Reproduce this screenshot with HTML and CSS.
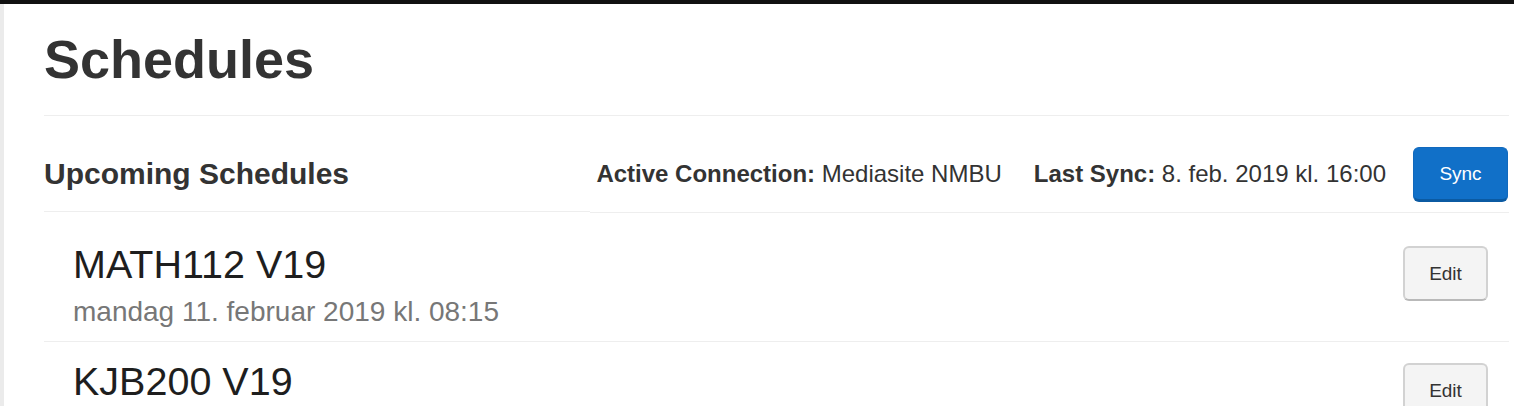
FILE: index.html
```html
<!DOCTYPE html>
<html lang="en">
<head>
<meta charset="utf-8">
<title>Schedules</title>
<link rel="stylesheet" href="styles.css">
</head>
<body>
<div class="topbar"></div>
<div class="page">
  <main class="content">
    <h1 class="title">Schedules</h1>
    <hr class="rule">
    <div class="header">
      <h2 class="header-title">Upcoming Schedules</h2>
      <div class="header-info">
        <span class="info info-conn"><b>Active Connection:</b> Mediasite NMBU</span>
        <span class="info info-sync"><b>Last Sync:</b> 8. feb. 2019 kl. 16:00</span>
        <button class="btn btn-primary" type="button">Sync</button>
      </div>
    </div>
    <ul class="list">
      <li class="item">
        <div class="item-text">
          <h3 class="item-title">MATH112 V19</h3>
          <p class="item-date">mandag 11. februar 2019 kl. 08:15</p>
        </div>
        <button class="btn btn-default" type="button">Edit</button>
      </li>
      <li class="item">
        <div class="item-text">
          <h3 class="item-title">KJB200 V19</h3>
          <p class="item-date">mandag 11. februar 2019 kl. 10:15</p>
        </div>
        <button class="btn btn-default" type="button">Edit</button>
      </li>
    </ul>
  </main>
</div>
</body>
</html>
```
FILE: styles.css
```css
html, body {
  margin: 0;
  padding: 0;
  background: #ffffff;
  font-family: "Liberation Sans", Arial, sans-serif;
  color: #333333;
  overflow: hidden;
}

.topbar {
  height: 4px;
  background: #111111;
}

.page {
  display: flow-root;
  border-left: 4px solid #ebebeb;
  min-height: 402px;
}

.content {
  margin: 0 5px 0 40px;
}

.title {
  margin: 26px 0 26px 0;
  font-size: 54px;
  line-height: 59px;
  font-weight: bold;
  color: #333333;
}

.rule {
  margin: 0;
  border: 0;
  border-top: 1px solid #eeeeee;
  height: 0;
}

.header {
  display: flex;
}

.header-title {
  width: 546px;
  flex: 0 0 546px;
  margin: 0 0 1px 0;
  padding-top: 41px;
  font-size: 30px;
  line-height: 33px;
  font-weight: bold;
  color: #333333;
  border-bottom: 1px solid #eeeeee;
  box-sizing: border-box;
}

.header-info {
  flex: 1;
  display: flex;
  justify-content: flex-end;
  align-items: center;
  padding: 31px 1px 10px 0;
  border-bottom: 1px solid #eeeeee;
}

.info {
  font-size: 24px;
  line-height: 30px;
  color: #333333;
  padding-bottom: 2px;
  white-space: nowrap;
}

.info b {
  font-weight: bold;
}

.info-sync {
  margin-left: 32px;
}

.btn {
  font-family: "Liberation Sans", Arial, sans-serif;
  font-size: 19px;
  border-radius: 6px;
  box-sizing: border-box;
  padding: 0;
  cursor: pointer;
}

.btn-primary {
  margin-left: 27px;
  width: 95px;
  height: 55px;
  background: #1170c8;
  color: #ffffff;
  border: 1px solid #1169bd;
  border-bottom: 3px solid #0b5aa2;
}

.btn-default {
  width: 85px;
  height: 55px;
  margin-top: 3px;
  background: #f4f4f4;
  color: #333333;
  border: 2px solid #d2d2d2;
  border-bottom-color: #b9b9b9;
}

.list {
  list-style: none;
  margin: 0;
  padding: 12px 0 0 0;
}

.item {
  display: flex;
  justify-content: space-between;
  align-items: flex-start;
  padding: 18px 21px 10px 29px;
  border-bottom: 1px solid #eeeeee;
}

.item-title {
  margin: 0;
  font-size: 39.5px;
  line-height: 42px;
  font-weight: normal;
  color: #1e1e1e;
}

.item-date {
  margin: 8px 0 0 0;
  font-size: 28px;
  line-height: 38px;
  color: #777777;
}
```
